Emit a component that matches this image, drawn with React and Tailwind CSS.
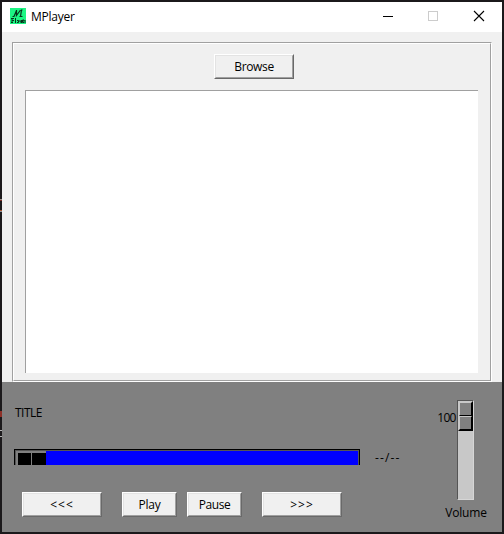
import React from "react";

function Button({ children, className = "" }) {
  return (
    <button
      className={`flex items-center justify-center border border-t-white border-l-white border-r-[#696969] border-b-[#696969] bg-[#f0f0f0] ${className}`}
    >
      <span className="flex h-full w-full items-center justify-center border border-t-[#e3e3e3] border-l-[#e3e3e3] border-r-[#a0a0a0] border-b-[#a0a0a0] whitespace-pre">
        {children}
      </span>
    </button>
  );
}

function TitleBar() {
  return (
    <header className="flex h-[30px] items-start bg-white">
      <svg className="mt-[6px] ml-2 h-4 w-4 shrink-0" viewBox="0 0 16 16">
        <rect width="16" height="16" fill="#1cf583" />
        <g fill="none" stroke="#06331a">
          <path d="M2.5 8.5H4L6.5 2.5M6.5 2v5.5L10.5 2M11 2h1.5M11.5 2l-1 6.5M9.5 8.5h3" strokeWidth="1.2" />
          <path d="M1 10.5h3M2 10v5M1 14.5h2M2 12.5h2M5.5 10v5M7 12.5h1.5v2H7M10 12v2h1.5v-2 3M12.5 13H14v-1h-1.5v2.5H14M15 12v3" strokeWidth="1" />
        </g>
      </svg>
      <span className="mt-[6px] ml-[5px] h-[18px] flex-1 leading-[18px] tracking-[-0.25px] text-black">MPlayer</span>
      <svg className="h-[30px] w-[130px] shrink-0" viewBox="372 2 130 30" fill="none" shapeRendering="crispEdges">
        <path d="M383 16.5h10" stroke="#000" />
        <rect x="428.5" y="11.5" width="9" height="9" stroke="#ccc" />
        <path d="M474 11l10 10M484 11l-10 10" stroke="#000" strokeWidth="1.1" shapeRendering="auto" />
      </svg>
    </header>
  );
}

function Playlist() {
  return (
    <section className="flex h-[350px] items-start bg-[#f0f0f0] pt-[10px] pl-[10px]">
      <div className="h-[340px] w-[480px] border border-t-[#a0a0a0] border-l-[#a0a0a0] border-r-white border-b-white">
        <div className="flex h-full w-full flex-col items-start border border-t-white border-l-white border-r-[#a0a0a0] border-b-[#a0a0a0] pt-[10px]">
          <Button className="ml-[200px] h-[25px] w-[80px] shrink-0 tracking-[-0.35px]">Browse</Button>
          <div className="mt-[11px] ml-[11px] h-[283px] w-[453px] shrink-0 border-t border-l border-[#a0a0a0] bg-white" />
        </div>
      </div>
    </section>
  );
}

function ProgressBar() {
  return (
    <div className="flex h-4 w-[346px] border-x border-t border-black">
      <div className="flex w-full border-x border-t border-[#555]">
        <div className="flex h-full w-[30px] border-t border-l border-[#808080] bg-black">
          <div className="w-[14px] border-t border-l border-[#808080]" />
          <div className="flex-1 border-t border-l border-[#808080]" />
        </div>
        <div className="flex-1 bg-[#0000ff]" />
      </div>
    </div>
  );
}

function Volume() {
  return (
    <div className="flex w-[68px] flex-col pt-[18px]">
      <div className="flex h-[100px]">
        <span className="mt-[9px] w-[23px] pl-[3px] leading-[18px] tracking-[-0.7px]">100</span>
        <div className="flex h-[100px] w-[17px] border border-t-[#555] border-l-[#555] border-r-[#d6d6d6] border-b-[#d6d6d6] bg-[#c8c8c8]">
          <div className="flex h-[30px] w-[15px] flex-col border border-t-[#c8c8c8] border-l-[#c8c8c8] border-r-black border-b-black bg-[#808080]">
            <div className="h-[14px] border border-t-[#c8c8c8] border-l-[#c8c8c8] border-r-black border-b-black" />
            <div className="h-[14px] border border-t-[#c8c8c8] border-l-[#c8c8c8] border-r-black border-b-black" />
          </div>
        </div>
      </div>
      <span className="mt-[4px] ml-[11px] leading-[18px] tracking-[-0.2px]">Volume</span>
    </div>
  );
}

function Controls() {
  return (
    <section className="flex h-[150px] bg-[#808080]">
      <div className="flex w-[432px] flex-col">
        <span className="mt-[22px] ml-[13px] h-[18px] leading-[18px] tracking-[-0.5px]">TITLE</span>
        <div className="mt-[27px] ml-3 flex h-4 items-start">
          <ProgressBar />
          <span className="ml-[15px] leading-[18px] tracking-[1.1px]">--/--</span>
        </div>
        <div className="mt-[27px] ml-5 flex h-[25px]">
          <Button className="w-[80px] tracking-[1px]">{"<<<"}</Button>
          <Button className="ml-5 w-[55px] tracking-[-0.2px]">Play</Button>
          <Button className="ml-[10px] w-[55px] tracking-[-0.4px]">Pause</Button>
          <Button className="ml-5 w-[80px] tracking-[1px]">{">>>"}</Button>
        </div>
      </div>
      <div className="w-[2px] shrink-0" />
      <Volume />
    </section>
  );
}

function EdgeMarks() {
  return (
    <div className="absolute top-0 left-0 h-[534px] w-[2px]">
      <div className="absolute top-[199px] h-px w-full bg-[#9a8f88]" />
      <div className="absolute top-[200px] h-px w-full bg-[#7a2c26]" />
      <div className="absolute top-[210px] h-px w-full bg-[#a5532f]" />
      <div className="absolute top-[211px] h-px w-full bg-[#8b8f98]" />
      <div className="absolute top-[411px] h-[6px] w-full bg-[#8e3028]" />
      <div className="absolute top-[430px] h-px w-full bg-[#b4b4b4]" />
      <div className="absolute top-[436px] h-px w-full bg-[#b4b4b4]" />
    </div>
  );
}

export default function App() {
  return (
    <div className="relative h-[534px] w-[504px] overflow-hidden bg-[#1b191b] p-[2px] font-['Open_Sans','Noto_Sans',sans-serif] text-[12px] text-black">
      <TitleBar />
      <Playlist />
      <Controls />
      <EdgeMarks />
    </div>
  );
}
